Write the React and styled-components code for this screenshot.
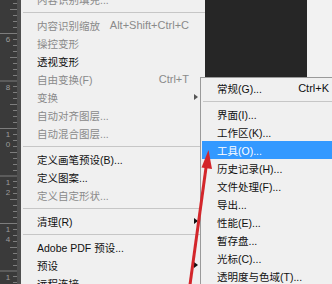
import React from 'react';
import styled, { createGlobalStyle } from 'styled-components';

const GlobalStyle = createGlobalStyle`
    html, body {
        margin: 0;
        padding: 0;
        background: #f0f0f0;
    }
    body {
        font-family: "Liberation Sans", "Noto Sans CJK SC", sans-serif;
    }
`;

const Screen = styled.div`
    position: relative;
    display: flex;
    width: 332px;
    height: 284px;
    overflow: hidden;
    background: #f0f0f0;
`;

const RulerStrip = styled.div`
    flex: 0 0 21px;
    background: #3a3a3a;
`;

const MainMenu = styled.div`
    flex: 0 0 184px;
    margin-top: -10px;
    background: #f0f0f0;
    display: flex;
    flex-flow: column nowrap;
`;

const RightSide = styled.div`
    flex: 1;
    display: flex;
    flex-flow: column nowrap;
`;

const TopArea = styled.div`
    height: 77px;
    display: flex;
`;

const Canvas = styled.div`
    flex: 0 0 102px;
    background: #262626;
`;

const SidePanel = styled.div`
    flex: 1;
    background: #f2f2f2;
`;

const SubMenu = styled.div`
    position: absolute;
    left: 200px;
    top: 77px;
    width: 143px;
    padding: 1px;
    background: #f0f0f0;
    border: 1px solid #9a9a9a;
    display: flex;
    flex-flow: column nowrap;
`;

const Row = styled.div`
    height: 18px;
    flex: 0 0 18px;
    display: grid;
    grid-template-columns: 1fr auto 16px;
    align-items: center;
    padding-left: ${props => props.$indent}px;
    font-size: 10.5px;
    white-space: nowrap;
    color: ${props => props.$active ? '#ffffff' : props.$dim ? '#8a8a8a' : '#111111'};
    background: ${props => props.$active ? '#3399ff' : 'transparent'};
`;

const Key = styled.span`
    font-size: 11px;
`;

const ArrowCell = styled.span`
    display: flex;
    align-items: center;
    padding-left: 5px;
    height: 100%;
`;

const Arrow = styled.span`
    width: 0;
    height: 0;
    border-left: 4px solid ${props => props.$dim ? '#555555' : '#111111'};
    border-top: 3.5px solid transparent;
    border-bottom: 3.5px solid transparent;
`;

const Separator = styled.div`
    flex: 0 0 8px;
    box-sizing: border-box;
    padding: 4px 0 3px ${props => props.$inset}px;
    & > div {
        height: 1px;
        background: #c6c6c6;
    }
`;

const Overlay = styled.svg`
    position: absolute;
    left: 0;
    top: 0;
    pointer-events: none;
`;

const mainItems = [
    { label: '内容识别填充...', dim: true },
    'sep',
    { label: '内容识别缩放', shortcut: 'Alt+Shift+Ctrl+C', dim: true },
    { label: '操控变形', dim: true },
    { label: '透视变形' },
    { label: '自由变换(F)', shortcut: 'Ctrl+T', dim: true },
    { label: '变换', dim: true, sub: true },
    { label: '自动对齐图层...', dim: true },
    { label: '自动混合图层...', dim: true },
    'sep',
    { label: '定义画笔预设(B)...' },
    { label: '定义图案...' },
    { label: '定义自定形状...', dim: true },
    'sep',
    { label: '清理(R)', sub: true },
    'sep',
    { label: 'Adobe PDF 预设...' },
    { label: '预设', sub: true },
    { label: '远程连接...' },
];

const subItems = [
    { label: '常规(G)...', shortcut: 'Ctrl+K' },
    'sep',
    { label: '界面(I)...' },
    { label: '工作区(K)...' },
    { label: '工具(O)...', active: true },
    { label: '历史记录(H)...' },
    { label: '文件处理(F)...' },
    { label: '导出...' },
    { label: '性能(E)...' },
    { label: '暂存盘...' },
    { label: '光标(C)...' },
    { label: '透明度与色域(T)...' },
];

function MenuList({ items, indent, inset }) {
    return items.map((item, i) => {
        if (item === 'sep') {
            return <Separator key={i} $inset={inset}><div /></Separator>;
        }
        return (
            <Row key={i} $indent={indent} $dim={item.dim} $active={item.active}>
                <span>{item.label}</span>
                <Key>{item.shortcut}</Key>
                <ArrowCell>{item.sub && <Arrow $dim={item.dim} />}</ArrowCell>
            </Row>
        );
    });
}

function Ruler() {
    const majors = [33, 80.5, 128, 175.5, 223, 270.5];
    const labels = ['6', '8', '10', '12', '14', '16'];
    const ticks = [];
    for (let m = -14.5; m < 290; m += 47.5) {
        ticks.push(<line key={'M' + m} x1="0" x2="17" y1={m + 0.5} y2={m + 0.5} />);
        for (let k = 1; k < 8; k++) {
            const y = Math.round(m + k * 47.5 / 8) + 0.5;
            ticks.push(<line key={m + '-' + k} x1={k === 4 ? 10 : 13} x2="17" y1={y} y2={y} />);
        }
    }
    return (
        <svg width="21" height="284">
            <rect x="0" y="0" width="21" height="284" fill="#3a3a3a" />
            <rect x="17" y="0" width="4" height="284" fill="#4e4e4e" />
            <g stroke="#7d7d7d" strokeWidth="1">{ticks}</g>
            <g fill="#9c9c9c" fontSize="8" fontFamily="Liberation Sans, sans-serif" textAnchor="middle">
                {majors.map((m, i) =>
                    labels[i].split('').map((d, j) => (
                        <text key={i + '-' + j} x="8" y={m + 9 + j * 10}>{d}</text>
                    ))
                )}
            </g>
        </svg>
    );
}

export default function App() {
    return (
        <>
            <GlobalStyle />
            <Screen>
                <RulerStrip>
                    <Ruler />
                </RulerStrip>
                <MainMenu>
                    <MenuList items={mainItems} indent={16} inset={2} />
                </MainMenu>
                <RightSide>
                    <TopArea>
                        <Canvas />
                        <SidePanel />
                    </TopArea>
                </RightSide>
                <SubMenu>
                    <MenuList items={subItems} indent={15} inset={1} />
                </SubMenu>
                <Overlay width="332" height="284">
                    <line x1="189" y1="292" x2="206.5" y2="164" stroke="#d3262b" strokeWidth="3" />
                    <polygon points="208.5,150 212,169 201.5,167.5" fill="#d3262b" />
                </Overlay>
            </Screen>
        </>
    );
}
